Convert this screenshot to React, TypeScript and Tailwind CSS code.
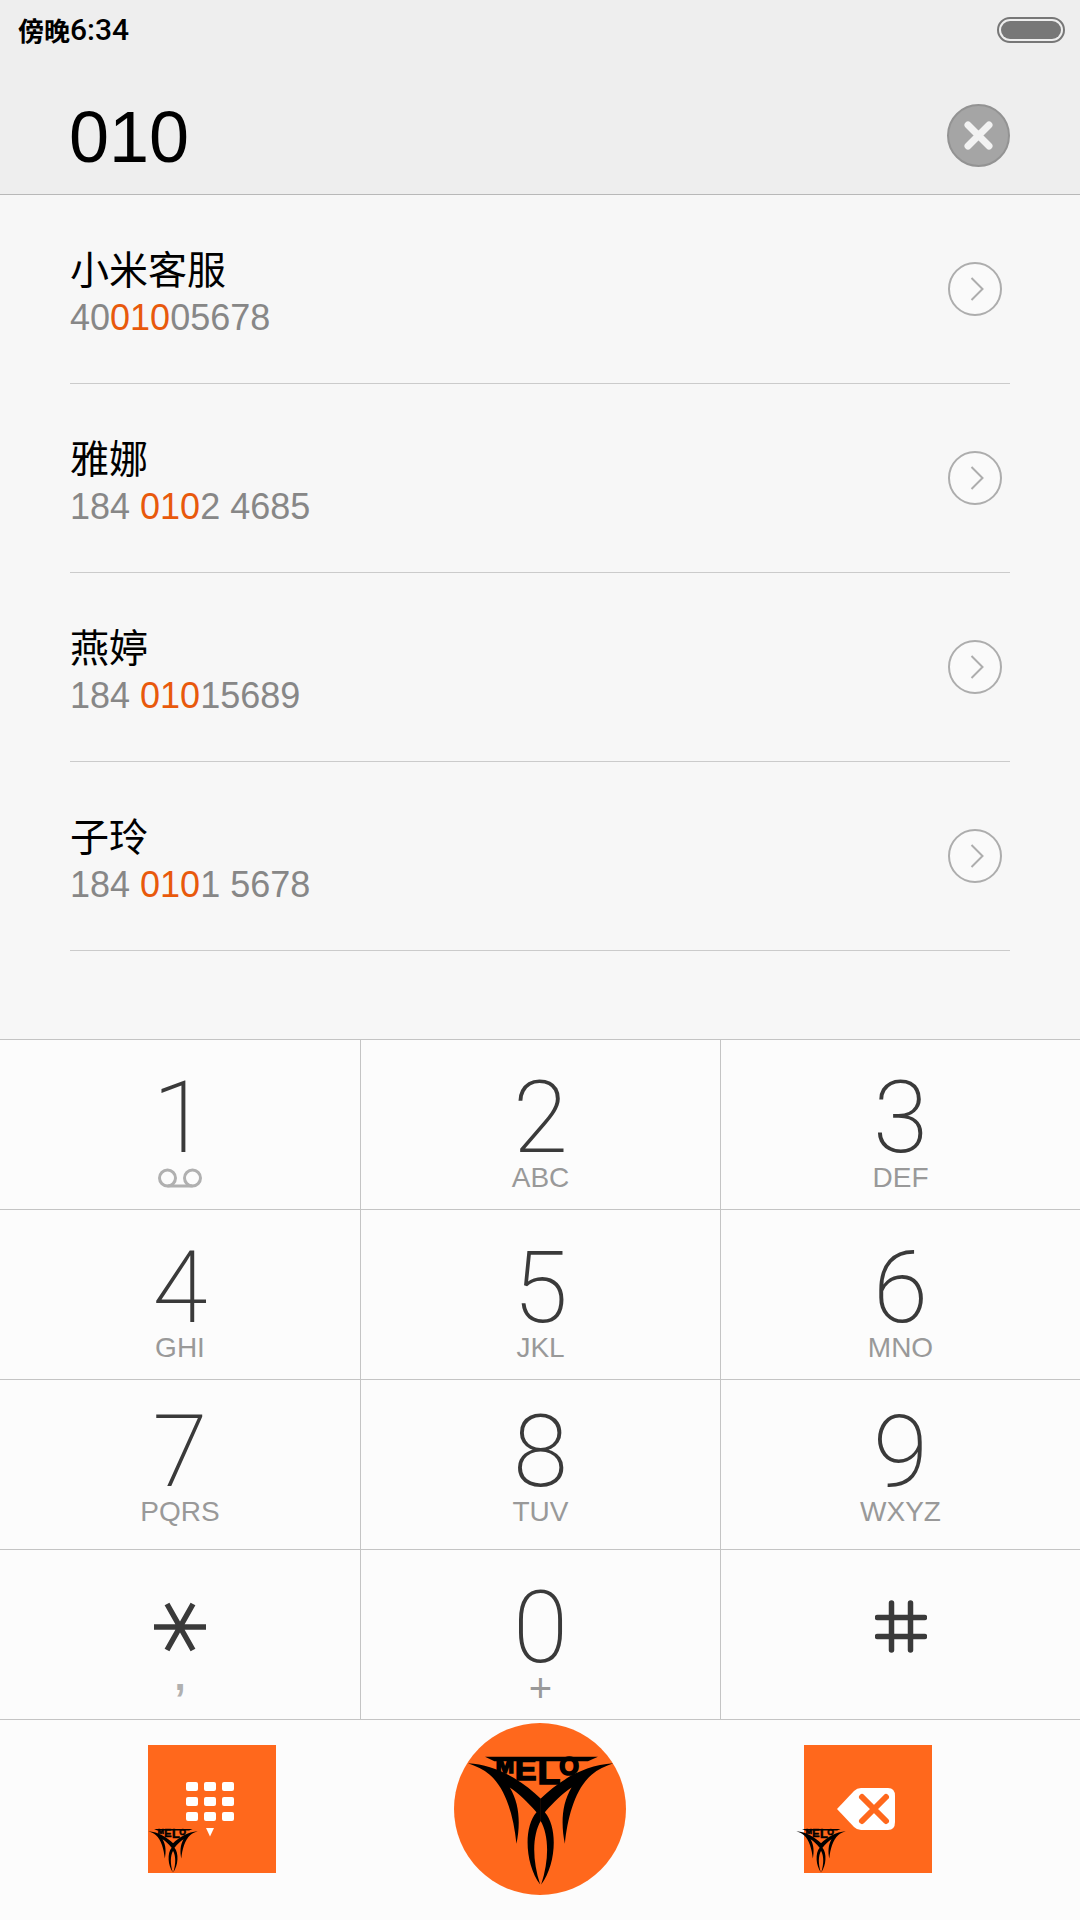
import { useState } from "react";
import type { ReactNode } from "react";

interface Contact {
  name: string;
  before: string;
  match: string;
  after: string;
}

interface DialKey {
  id: string;
  face: ReactNode;
  sub?: ReactNode;
}

interface KeyRow {
  className: string;
  keys: DialKey[];
}

const contacts: Contact[] = [
  { name: "小米客服", before: "40", match: "010", after: "05678" },
  { name: "雅娜", before: "184 ", match: "010", after: "2 4685" },
  { name: "燕婷", before: "184 ", match: "010", after: "15689" },
  { name: "子玲", before: "184 ", match: "010", after: "1 5678" },
];

function VoicemailIcon() {
  return (
    <svg width="44" height="20" viewBox="0 0 44 20" fill="none" stroke="#b0b0b0" strokeWidth="3" aria-hidden="true">
      <circle cx="9.5" cy="10" r="8" />
      <circle cx="34.5" cy="10" r="8" />
      <path d="M9.5 18h25" />
    </svg>
  );
}

function StarIcon() {
  return (
    <svg width="52" height="72" viewBox="0 0 52 72" fill="none" stroke="#3a3a3a" strokeWidth="5.5" aria-hidden="true">
      <path d="M0 35h52M13 12l26 46M39 12L13 58" />
    </svg>
  );
}

function PoundIcon() {
  return (
    <svg width="52" height="72" viewBox="0 0 52 72" fill="none" stroke="#3a3a3a" strokeWidth="5.5" strokeLinecap="round" aria-hidden="true">
      <path d="M2.5 25.500h47M2.5 44.500h47M16.500 11v47M35.500 11v47" />
    </svg>
  );
}

const keyRows: KeyRow[] = [
  {
    className: "pt-[42px]",
    keys: [
      { id: "1", face: "1", sub: <VoicemailIcon /> },
      { id: "2", face: "2", sub: "ABC" },
      { id: "3", face: "3", sub: "DEF" },
    ],
  },
  {
    className: "pt-[42px]",
    keys: [
      { id: "4", face: "4", sub: "GHI" },
      { id: "5", face: "5", sub: "JKL" },
      { id: "6", face: "6", sub: "MNO" },
    ],
  },
  {
    className: "pt-[36px]",
    keys: [
      { id: "7", face: "7", sub: "PQRS" },
      { id: "8", face: "8", sub: "TUV" },
      { id: "9", face: "9", sub: "WXYZ" },
    ],
  },
  {
    className: "pt-[42px]",
    keys: [
      { id: "*", face: <StarIcon />, sub: <span className="pb-6 text-[40px] font-bold text-[#b0b0b0]">,</span> },
      { id: "0", face: "0", sub: <span className="text-[40px]">+</span> },
      { id: "#", face: <PoundIcon /> },
    ],
  },
];

// One half of the wings, mirrored for the other side
const WING =
  "M113 158C200 163 276 210 331 264V330C306 372 304 445 329 521C284 460 278 350 318 304C290 272 264 247 238 230C268 280 270 340 258 399C250 320 228 235 178 192C160 176 136 166 113 158Z";

function MeloMark({ className }: { className: string }) {
  return (
    <svg className={className} viewBox="110 130 440 395" aria-hidden="true">
      <path d="M164 138H502L472 152H192Z" />
      <text className="font-['Liberation_Sans'] font-bold" stroke="#000" strokeWidth="5">
        <tspan x="196" y="186" fontSize="66">M</tspan>
        <tspan x="254" y="208" fontSize="96">E</tspan>
        <tspan x="321" y="220" fontSize="112">L</tspan>
        <tspan x="386" y="194" fontSize="76">O</tspan>
      </text>
      <path d={WING} />
      <path d={WING} transform="matrix(-1 0 0 1 661 0)" />
    </svg>
  );
}

function ContactRow({ contact }: { contact: Contact }) {
  return (
    <li className="flex h-[189px] items-center justify-between border-b border-[#cbcbcb] pr-2">
      <div className="flex flex-col gap-1 pt-2">
        <h2 className="font-['Noto_Sans_CJK_SC',sans-serif] text-[39px] leading-[46px] text-black">{contact.name}</h2>
        <p className="text-[36px] leading-[48px] whitespace-pre text-[#878787]">
          {contact.before}
          <span className="text-[#e8590c]">{contact.match}</span>
          {contact.after}
        </p>
      </div>
      <button type="button" aria-label={`查看${contact.name}`}>
        <svg width="54" height="54" viewBox="0 0 54 54" fill="none" stroke="#adadad" strokeWidth="2">
          <circle cx="27" cy="27" r="26" fill="#fafafa" />
          <path d="M23.500 16l11 11-11 11" />
        </svg>
      </button>
    </li>
  );
}

export default function App() {
  const [number, setNumber] = useState("010");

  return (
    <div className="flex min-h-screen flex-col bg-[#f7f7f7] font-['Liberation_Sans','Noto_Sans_CJK_SC',sans-serif]">
      <header className="border-b border-[#b8b8b8] bg-[#eeeeee]">
        <div className="flex h-[60px] items-center justify-between pr-[15px] pl-[18px]">
          <p className="flex items-center text-black">
            <span className="font-['Noto_Sans_CJK_SC',sans-serif] text-[26px] leading-[36px] font-bold">傍晚</span>
            <span className="font-['Roboto',sans-serif] text-[30px] leading-[36px] font-medium">6:34</span>
          </p>
          <div className="h-[26px] w-[68px] rounded-full border-2 border-[#777777] p-[2px]">
            <div className="h-full rounded-full bg-[#777777]" />
          </div>
        </div>
        <div className="flex h-[134px] items-center justify-between pt-4 pr-[70px] pl-[69px]">
          <input
            type="tel"
            aria-label="电话号码"
            value={number}
            onChange={(e) => setNumber(e.target.value)}
            className="min-w-0 flex-1 bg-transparent pt-1 text-[72px] leading-[84px] text-black outline-none"
          />
          <button type="button" aria-label="清除" onClick={() => setNumber("")}>
            <svg width="63" height="63" viewBox="0 0 63 63" fill="none">
              <circle cx="31.500" cy="31.500" r="30.500" fill="#a5a5a5" stroke="#939393" strokeWidth="2" />
              <path d="M21 21l21 21M42 21L21 42" stroke="#f2f2f2" strokeWidth="7" strokeLinecap="round" />
            </svg>
          </button>
        </div>
      </header>

      <main className="flex-1">
        <ul className="px-[70px]">
          {contacts.map((contact) => (
            <ContactRow key={contact.name} contact={contact} />
          ))}
        </ul>
      </main>

      <section aria-label="拨号键盘" className="border-t border-[#c4c4c4] bg-[#fcfcfc]">
        {keyRows.map((row) => (
          <div key={row.keys[0].id} className="grid grid-cols-3 border-b border-[#c4c4c4]">
            {row.keys.map((key) => (
              <button
                key={key.id}
                type="button"
                aria-label={key.id}
                onClick={() => setNumber(number + key.id)}
                className={`flex h-[169px] flex-col items-center gap-3 border-[#c4c4c4] not-first:border-l ${row.className}`}
              >
                <span className="font-['Roboto',sans-serif] text-[100px] leading-[72px] font-extralight text-[#3a3a3a]">
                  {key.face}
                </span>
                {key.sub && (
                  <span className="flex h-6 items-center text-[28px] leading-[24px] text-[#999999]">{key.sub}</span>
                )}
              </button>
            ))}
          </div>
        ))}
      </section>

      <footer className="grid grid-cols-3 place-items-center bg-[#fcfcfc] px-12 pt-[3px] pb-[25px]">
        <button type="button" aria-label="收起键盘" className="relative flex size-[128px] items-center justify-center bg-[#ff681c] pr-1">
          <svg width="48" height="55" viewBox="0 0 48 55" fill="#fff">
            {[0, 15, 30].map((y) =>
              [0, 18, 36].map((x) => <rect key={`${x}-${y}`} x={x} y={y} width="12" height="9" rx="2" />)
            )}
            <path d="M20 46h8l-4 8.500z" />
          </svg>
          <MeloMark className="absolute bottom-0 left-0 w-[50px]" />
        </button>
        <button type="button" aria-label="拨打" className="flex size-[172px] items-center justify-center rounded-full bg-[#ff681c] pt-[22px]">
          <MeloMark className="w-[147px]" />
        </button>
        <button
          type="button"
          aria-label="删除"
          onClick={() => setNumber(number.slice(0, -1))}
          className="relative flex size-[128px] items-center justify-center bg-[#ff681c] pr-1"
        >
          <svg width="58" height="42" viewBox="0 0 58 42" fill="none">
            <path d="M0 21L17 3Q20 0 24 0H51Q58 0 58 8V34Q58 42 51 42H24Q20 42 17 39Z" fill="#fff" />
            <path d="M25 9l24 24M49 9L25 33" stroke="#ff681c" strokeWidth="6" strokeLinecap="round" />
          </svg>
          <MeloMark className="absolute bottom-0 -left-2 w-[50px]" />
        </button>
      </footer>
    </div>
  );
}
